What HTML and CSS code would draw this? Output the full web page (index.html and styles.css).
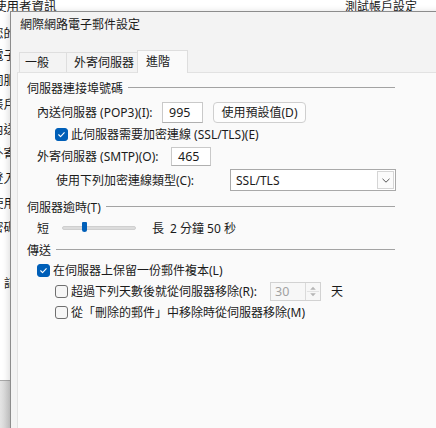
FILE: index.html
```html
<!DOCTYPE html>
<html lang="zh-Hant">
<head>
<meta charset="utf-8">
<link rel="stylesheet" href="styles.css">
</head>
<body>
<div class="backwin">
  <div class="back-user">使用者資訊</div>
  <div class="back-col">
    <div class="back-row">您的名稱</div>
    <div class="back-row">電子郵件地址</div>
    <div class="back-row">伺服器資訊</div>
    <div class="back-row">帳戶類型</div>
    <div class="back-row">內送郵件伺服器</div>
    <div class="back-row">外寄郵件伺服器</div>
    <div class="back-row">登入資訊</div>
    <div class="back-row">使用者名稱</div>
    <div class="back-row">密碼</div>
    <div class="back-check"><span class="back-box"></span><span>記憶密碼</span></div>
  </div>
  <div class="back-title">測試帳戶設定</div>
  <div class="back-bottom"></div>
</div>

<div class="dialog">
  <div class="title">網際網路電子郵件設定</div>
  <div class="tabs">
    <div class="tab t1">一般</div>
    <div class="tab t2">外寄伺服器</div>
    <div class="tab t3 sel">進階</div>
  </div>
  <div class="panel">
    <div class="ghead g1"><span>伺服器連接埠號碼</span><i class="rule"></i></div>

    <div class="row r-pop">
      <span class="lbl l-pop">內送伺服器 (POP3)(I):</span>
      <div class="input in-pop">995</div>
      <div class="btn">使用預設值(D)</div>
    </div>

    <div class="row r-ssl">
      <span class="cb on"><svg viewBox="0 0 13 13"><path d="M3.2 6.8 L5.4 9 L9.8 4.4" /></svg></span>
      <span class="lbl">此伺服器需要加密連線 (SSL/TLS)(E)</span>
    </div>

    <div class="row r-smtp">
      <span class="lbl l-smtp">外寄伺服器 (SMTP)(O):</span>
      <div class="input in-smtp">465</div>
    </div>

    <div class="row r-enc">
      <span class="lbl l-enc">使用下列加密連線類型(C):</span>
      <div class="select">
        <span class="sel-text">SSL/TLS</span>
        <span class="sel-btn"><svg viewBox="0 0 8 5"><path d="M0.5 0.8 L4 4.2 L7.5 0.8" /></svg></span>
      </div>
    </div>

    <div class="ghead g2"><span>伺服器逾時(T)</span><i class="rule"></i></div>

    <div class="row r-slide">
      <span class="lbl l-short">短</span>
      <div class="track"><span class="thumb"></span></div>
      <span class="lbl l-long">長</span>
      <span class="lbl">2 分鐘 50 秒</span>
    </div>

    <div class="ghead g3"><span>傳送</span><i class="rule"></i></div>

    <div class="row r-keep">
      <span class="cb on"><svg viewBox="0 0 13 13"><path d="M3.2 6.8 L5.4 9 L9.8 4.4" /></svg></span>
      <span class="lbl">在伺服器上保留一份郵件複本(L)</span>
    </div>

    <div class="row r-days">
      <span class="cb"></span>
      <span class="lbl l-days">超過下列天數後就從伺服器移除(R):</span>
      <div class="spin">
        <span class="spin-val">30</span>
        <span class="spin-btns">
          <svg viewBox="0 0 15 17"><path class="arr" d="M4.5 6.5 L7.5 3.5 L10.5 6.5 Z" /><path class="arr" d="M4.5 10.5 L7.5 13.5 L10.5 10.5 Z" /><path class="sep" d="M1 8.5 H14" /></svg>
        </span>
      </div>
      <span class="lbl l-day">天</span>
    </div>

    <div class="row r-del">
      <span class="cb"></span>
      <span class="lbl">從「刪除的郵件」中移除時從伺服器移除(M)</span>
    </div>
  </div>
</div>
</body>
</html>
```
FILE: styles.css
```css
* { box-sizing: border-box; margin: 0; padding: 0; }
html, body { width: 436px; height: 428px; overflow: hidden; }
body {
  position: relative;
  background: #ffffff;
  font-family: "Noto Sans", "Noto Sans CJK TC", sans-serif;
  font-size: 12px;
  color: #1b1b1b;
}

/* background window */
.backwin { position: absolute; left: 0; top: 0; width: 436px; height: 428px; background: #ffffff; overflow: hidden; }
.back-user { position: absolute; left: -6px; top: -2px; font-size: 12.5px; line-height: 18px; }
.back-col {
  position: absolute; left: 0; top: 25px; width: 10px; overflow: hidden;
  display: flex; flex-direction: column;
}
.back-row { font-size: 12.5px; line-height: 18px; height: 24.6px; margin-left: -9px; white-space: nowrap; }
.back-row:first-child { height: 22px; }
.back-check { margin-top: 30px; display: flex; align-items: center; gap: 4px; margin-left: -12px; white-space: nowrap; }
.back-box { width: 12px; height: 13px; border: 1px solid #555; border-radius: 3px; background: #fff; flex: none; }
.back-title { position: absolute; left: 345px; top: -1px; font-size: 12px; line-height: 16px; }
.back-bottom { position: absolute; left: 0; top: 380px; width: 12px; height: 48px; border-top: 1px solid #a8a8a8; background: linear-gradient(90deg, #e4e4e4, #c9c9c9); }

/* dialog */
.dialog {
  position: absolute; left: 10px; top: 11px; width: 440px; height: 430px;
  background: #f3f3f3; border: 1px solid #8c8c8c;
  box-shadow: -2px 0 6px rgba(0,0,0,0.12);
  display: flex; flex-direction: column;
}
.title { height: 26px; line-height: 26px; padding-left: 9px; font-size: 12px; color: #1b1b1b; }
.tabs { margin-top: 12px; height: 22px; padding-left: 8px; display: flex; align-items: flex-end; }
.tab {
  height: 20px; line-height: 19px; background: #f3f3f3;
  border: 1px solid #dedede; border-bottom: none; border-right: none;
  font-size: 12px;
}
.t1 { width: 47px; padding-left: 5px; }
.t2 { width: 71px; padding-left: 7px; }
.t3 { width: 51px; padding-left: 8px; }
.tab.sel {
  height: 23px; line-height: 22px; background: #fafafa; border-right: 1px solid #dedede;
  margin-bottom: -1px; position: relative; z-index: 1;
}
.panel {
  margin-left: 6px; flex: 1; background: #fafafa;
  border-top: 1px solid #e2e2e2; border-left: 1px solid #e2e2e2;
  padding: 7px 0 0 9px;
  display: flex; flex-direction: column;
}

.ghead { width: 368px; height: 16px; display: flex; align-items: center; font-size: 12px; }
.ghead .rule { flex: 1; height: 1px; background: #a3a3a3; margin-left: 5px; margin-top: -1px; }
.g2 { margin-top: 8px; }
.g3 { margin-top: 5px; }

.row { display: flex; align-items: center; }
.lbl { font-size: 12px; white-space: nowrap; }

.r-pop { height: 22px; margin-top: 5px; padding-left: 10px; }
.l-pop { width: 125px; }
.input {
  background: #fff; border: 1px solid #c9c9c9; border-bottom-color: #b0b0b0;
  font-size: 12.5px; padding-left: 6px; display: flex; align-items: center;
}
.in-pop { width: 41px; height: 21px; }
.btn {
  margin-left: 10px; width: 93px; height: 21px; border: 1px solid #cfcfcf; border-radius: 4px;
  background: #fdfdfd; display: flex; align-items: center; justify-content: center; font-size: 12px;
}

.r-ssl { height: 20px; margin-top: 1px; padding-left: 28px; }
.cb {
  width: 13px; height: 13px; border-radius: 3px; border: 1px solid #6f6f6f; background: #f6f6f6;
  margin-right: 3px; flex: none; display: flex; align-items: center; justify-content: center;
}
.cb.on { background: #005fb8; border-color: #005fb8; }
.cb svg { width: 13px; height: 13px; }
.cb svg path { fill: none; stroke: #fff; stroke-width: 1.3; stroke-linecap: round; stroke-linejoin: round; }

.r-smtp { height: 20px; margin-top: 2px; padding-left: 10px; }
.l-smtp { width: 134px; }
.in-smtp { width: 40px; height: 19px; }

.r-enc { height: 22px; margin-top: 3px; padding-left: 29px; }
.l-enc { width: 174px; }
.select {
  width: 166px; height: 22px; border: 1px solid #a9a9a9; background: #fff;
  display: flex; align-items: center; justify-content: space-between; padding: 0 1px 0 5px;
}
.sel-text { font-size: 12px; }
.sel-btn {
  width: 17px; height: 18px; border: 1px solid #d5d5d5; background: #fbfbfb;
  display: flex; align-items: center; justify-content: center;
}
.sel-btn svg { width: 8px; height: 5px; }
.sel-btn svg path { fill: none; stroke: #555; stroke-width: 1; }

.r-slide { height: 18px; margin-top: 4px; padding-left: 10px; }
.l-short { width: 25px; }
.track { width: 74px; height: 4px; background: #dcdcdc; border: 1px solid #cfcfcf; border-radius: 2px; position: relative; }
.thumb {
  position: absolute; left: 19px; top: -5px; width: 5px; height: 10px;
  background: #005fb8; border-radius: 1px 1px 2.5px 2.5px;
}
.l-long { margin-left: 16px; margin-right: 6px; }

.r-keep { height: 20px; margin-top: 2px; padding-left: 10px; }
.r-days { height: 20px; margin-top: 1px; padding-left: 28px; }
.l-days { width: 199px; }
.spin {
  width: 51px; height: 19px; border: 1px solid #d2d2d2; background: #f7f7f7;
  display: flex; align-items: center; justify-content: space-between; padding-left: 4px;
}
.spin-val { font-size: 12.5px; color: #a2a2a2; }
.spin-btns { width: 15px; height: 17px; border-left: 1px solid #dadada; display: flex; }
.spin-btns svg { width: 15px; height: 17px; }
.spin-btns .arr { fill: #b5b5b5; }
.spin-btns .sep { stroke: #e0e0e0; stroke-width: 1; }
.l-day { margin-left: 10px; }
.r-del { height: 20px; margin-top: 1px; padding-left: 28px; }
```
